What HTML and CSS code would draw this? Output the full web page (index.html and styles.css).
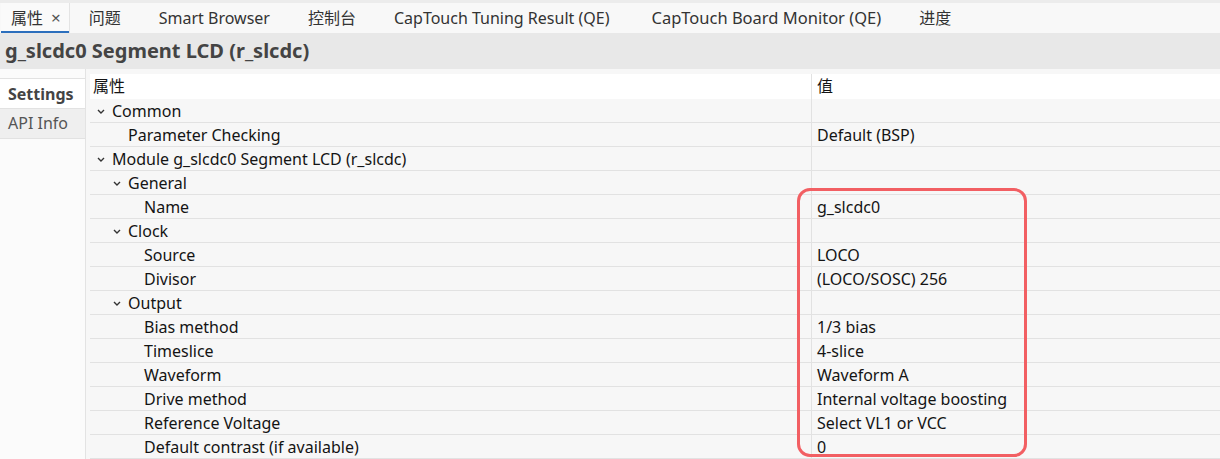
FILE: index.html
```html
<!DOCTYPE html>
<html>
<head>
<meta charset="utf-8">
<link rel="stylesheet" href="styles.css">
</head>
<body>
<div class="tabbar">
  <div class="tab active"><span>属性</span><span class="close">×</span></div>
  <div class="tab">问题</div>
  <div class="tab">Smart Browser</div>
  <div class="tab">控制台</div>
  <div class="tab">CapTouch Tuning Result (QE)</div>
  <div class="tab wide">CapTouch Board Monitor (QE)</div>
  <div class="tab">进度</div>
</div>
<div class="titlebar">g_slcdc0 Segment LCD (r_slcdc)</div>
<div class="main">
  <div class="sidebar">
    <div class="side-tab selected">Settings</div>
    <div class="side-tab">API Info</div>
  </div>
  <div class="grid">
    <div class="row head"><div class="c1">属性</div><div class="c2">值</div></div>
    <div class="row"><div class="c1 l0"><svg class="chev" viewBox="0 0 8 5"><polyline points="1,1 4,4 7,1"/></svg>Common</div><div class="c2"></div></div>
    <div class="row"><div class="c1 l1n">Parameter Checking</div><div class="c2">Default (BSP)</div></div>
    <div class="row"><div class="c1 l0"><svg class="chev" viewBox="0 0 8 5"><polyline points="1,1 4,4 7,1"/></svg>Module g_slcdc0 Segment LCD (r_slcdc)</div><div class="c2"></div></div>
    <div class="row"><div class="c1 l1"><svg class="chev" viewBox="0 0 8 5"><polyline points="1,1 4,4 7,1"/></svg>General</div><div class="c2"></div></div>
    <div class="row"><div class="c1 l2n">Name</div><div class="c2">g_slcdc0</div></div>
    <div class="row"><div class="c1 l1"><svg class="chev" viewBox="0 0 8 5"><polyline points="1,1 4,4 7,1"/></svg>Clock</div><div class="c2"></div></div>
    <div class="row"><div class="c1 l2n">Source</div><div class="c2">LOCO</div></div>
    <div class="row"><div class="c1 l2n">Divisor</div><div class="c2">(LOCO/SOSC) 256</div></div>
    <div class="row"><div class="c1 l1"><svg class="chev" viewBox="0 0 8 5"><polyline points="1,1 4,4 7,1"/></svg>Output</div><div class="c2"></div></div>
    <div class="row"><div class="c1 l2n">Bias method</div><div class="c2">1/3 bias</div></div>
    <div class="row"><div class="c1 l2n">Timeslice</div><div class="c2">4-slice</div></div>
    <div class="row"><div class="c1 l2n">Waveform</div><div class="c2">Waveform A</div></div>
    <div class="row"><div class="c1 l2n">Drive method</div><div class="c2">Internal voltage boosting</div></div>
    <div class="row"><div class="c1 l2n">Reference Voltage</div><div class="c2">Select VL1 or VCC</div></div>
    <div class="row"><div class="c1 l2n">Default contrast (if available)</div><div class="c2">0</div></div>
  </div>
  <div class="highlight"></div>
</div>
</body>
</html>
```
FILE: styles.css
```css
html, body {
  margin: 0;
  padding: 0;
  width: 1220px;
  height: 459px;
  overflow: hidden;
  background: #f7f7f7;
  font-family: "Noto Sans", "Noto Sans CJK SC", sans-serif;
  color: #141414;
}
.tabbar {
  display: flex;
  height: 30px;
  border-top: 3px solid #ececec;
  background: #f8f8f8;
  font-size: 16px;
}
.tab {
  padding: 0 19px;
  line-height: 30px;
  color: #333;
  white-space: nowrap;
}
.tab.wide {
  font-size: 16.5px;
  padding-left: 23px;
}
.tab.active {
  padding: 0 8px 0 10px;
  background: #fafafa;
  box-shadow: inset 0 -2px 0 #2c6fbd;
  margin-left: 1px;
  border-right: 1px solid #e4e4e4;
}
.tab.active .close {
  margin-left: 8px;
  font-size: 17px;
  color: #555;
}
.titlebar {
  height: 36px;
  line-height: 36px;
  background: #e8e8e8;
  padding-left: 5px;
  font-size: 20px;
  font-weight: bold;
  color: #444;
}
.main {
  position: relative;
  display: flex;
  height: 390px;
}
.sidebar {
  width: 85px;
  border-right: 1px solid #e3e3e3;
  background: #fbfbfb;
  padding-top: 9px;
}
.side-tab {
  height: 29px;
  line-height: 29px;
  padding-left: 8px;
  font-size: 16px;
  color: #555;
  background: #efefef;
  border-top: 1px solid #e2e2e2;
  border-bottom: 1px solid #e2e2e2;
}
.side-tab.selected {
  background: #fff;
  font-weight: bold;
  color: #444;
  border-bottom: none;
  line-height: 30px;
}
.grid {
  flex: 1;
  padding-left: 4px;
  padding-top: 5px;
  background: #f7f7f7;
}
.row {
  display: grid;
  grid-template-columns: 722px 1fr;
  height: 24px;
  border-bottom: 1px solid #e2e2e2;
  box-sizing: border-box;
  font-size: 16px;
  line-height: 24px;
}
.row.head {
  height: 25px;
  background: #fff;
  border-bottom: none;
  line-height: 25px;
}
.row.head .c1 { padding-left: 3px; }
.c1 {
  white-space: nowrap;
  border-right: 1px solid #e2e2e2;
  display: flex;
  align-items: center;
}
.c2 {
  padding-left: 5px;
  white-space: nowrap;
}
.chev {
  width: 8px;
  height: 5px;
  margin-right: 7px;
  fill: none;
  stroke: #333;
  stroke-width: 1.4;
}
.l0 { padding-left: 7px; }
.l1 { padding-left: 23px; }
.l1n { padding-left: 38px; }
.l2n { padding-left: 54px; }
.highlight {
  position: absolute;
  left: 797px;
  top: 119px;
  width: 230px;
  height: 269px;
  border: 3px solid #f25f63;
  border-radius: 13px;
  box-sizing: border-box;
}
```
